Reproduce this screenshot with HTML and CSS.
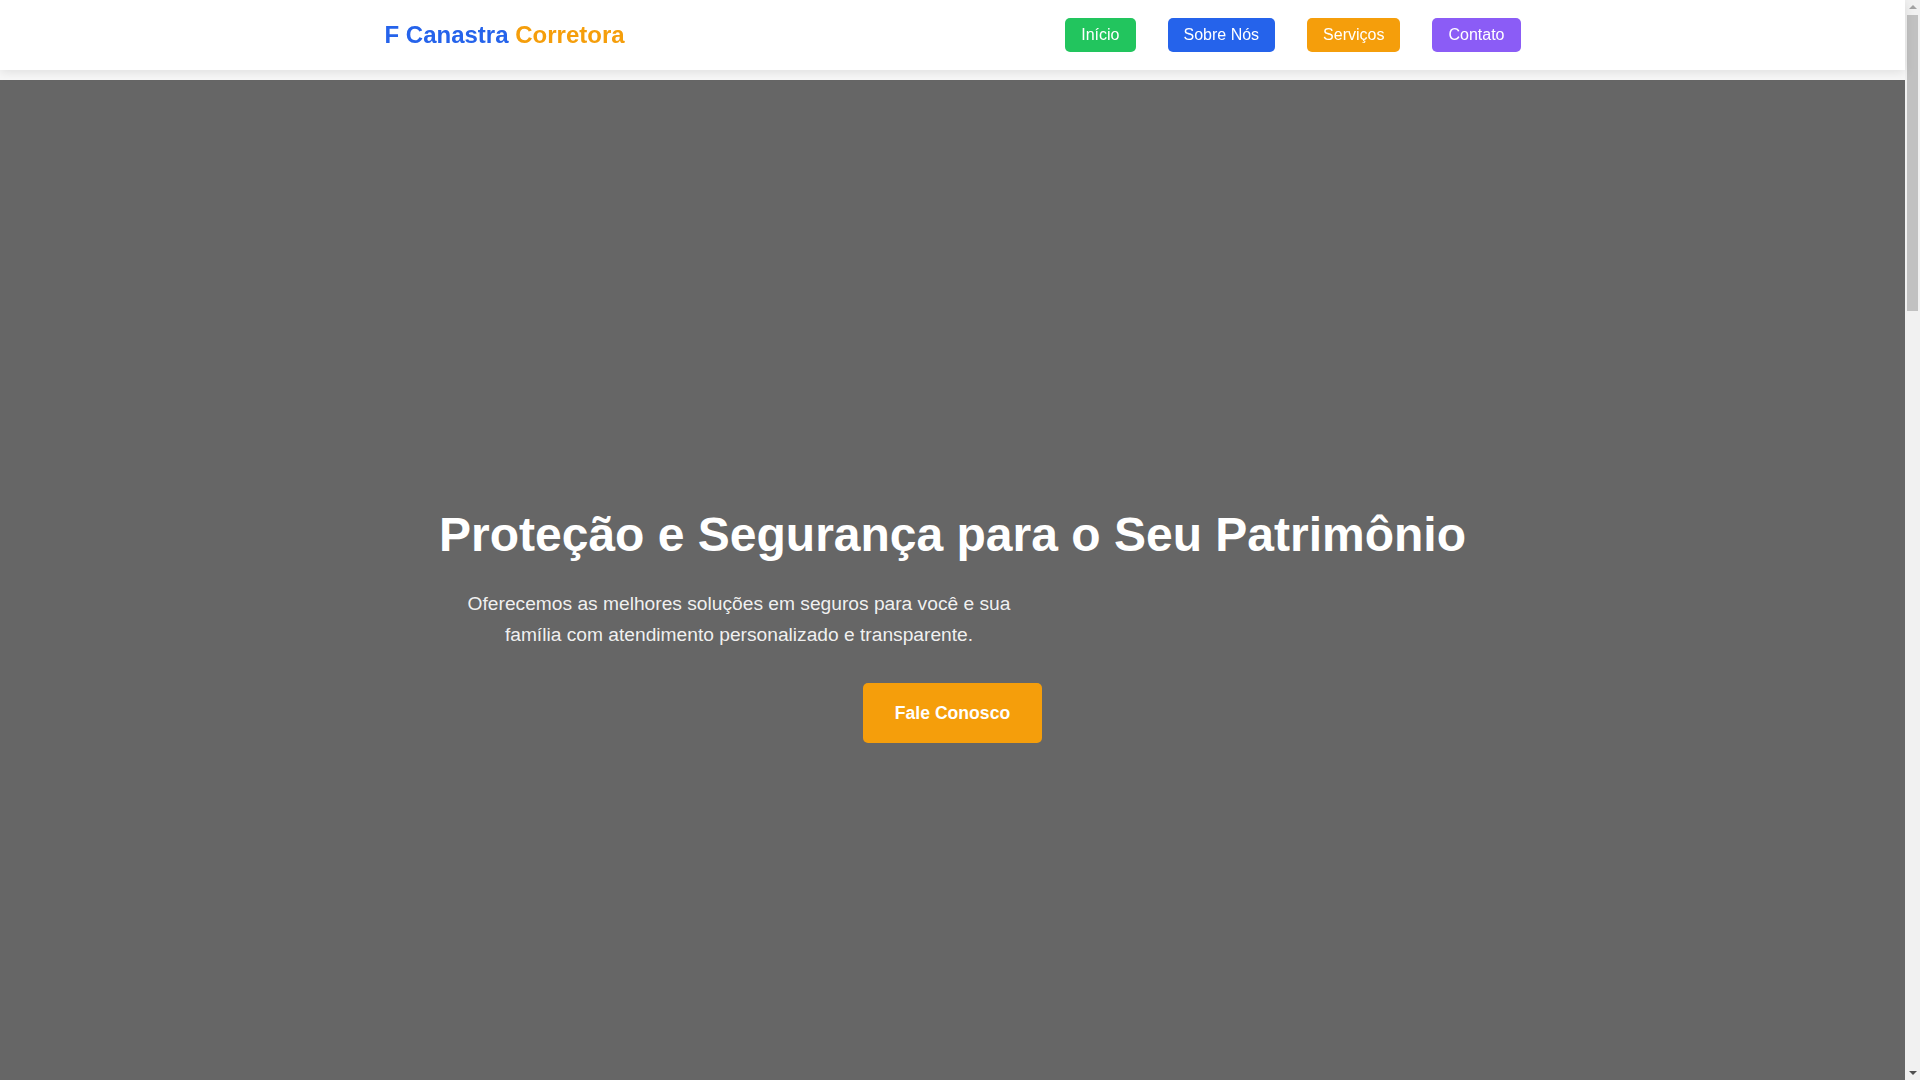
FILE: index.html
```html
<!DOCTYPE html>
<html lang="pt-BR">
<head>
<meta charset="UTF-8">
<title>F Canastra Corretora</title>
<link rel="stylesheet" href="styles.css">
</head>
<body>
<header class="site-header">
  <div class="container header-inner">
    <div class="logo"><span class="logo-blue">F Canastra</span> <span class="logo-orange">Corretora</span></div>
    <nav>
      <ul class="nav-list">
        <li><a href="#" class="nav-link nav-green">Início</a></li>
        <li><a href="#" class="nav-link nav-blue">Sobre Nós</a></li>
        <li><a href="#" class="nav-link nav-orange">Serviços</a></li>
        <li><a href="#" class="nav-link nav-purple">Contato</a></li>
      </ul>
    </nav>
  </div>
</header>
<section class="hero">
  <div class="hero-content">
    <h1 class="hero-title">Proteção e Segurança para o Seu Patrimônio</h1>
    <p class="hero-text">Oferecemos as melhores soluções em seguros para você e sua família com atendimento personalizado e transparente.</p>
    <a href="#" class="cta">Fale Conosco</a>
  </div>
</section>
<div class="scrollbar" aria-hidden="true">
  <span class="sb-arrow sb-up"></span>
  <span class="sb-thumb"></span>
  <span class="sb-arrow sb-down"></span>
</div>
</body>
</html>
```
FILE: styles.css
```css
* { box-sizing: border-box; }
html, body { margin: 0; padding: 0; }
body {
  font-family: "Liberation Sans", Arial, sans-serif;
  line-height: 1.6;
  background: #f7f7f7;
  color: #333;
  padding-right: 15px;
}
.site-header {
  position: relative;
  z-index: 2;
  background: #ffffff;
  box-shadow: 0 2px 10px rgba(0, 0, 0, 0.1);
  padding: 1rem 0;
}
.container {
  max-width: 1200px;
  margin: 0 auto;
  padding: 0 2rem;
}
.header-inner {
  display: flex;
  align-items: center;
  justify-content: space-between;
}
.logo {
  font-size: 24px;
  font-weight: bold;
}
.logo-blue { color: #2563eb; }
.logo-orange { color: #f59e0b; }
.nav-list {
  list-style: none;
  margin: 0;
  padding: 0;
  display: flex;
  gap: 2rem;
}
.nav-link {
  display: block;
  color: #ffffff;
  text-decoration: none;
  font-size: 16px;
  padding: 4px 16px;
  border-radius: 5px;
}
.nav-green { background: #22c55e; }
.nav-blue { background: #2563eb; }
.nav-orange { background: #f59e0b; }
.nav-purple { background: #8b5cf6; }
.hero {
  margin-top: 10px;
  min-height: 1088px;
  background: #666666;
  display: flex;
  align-items: center;
  justify-content: center;
  text-align: center;
  color: #ffffff;
}
.hero-title {
  font-size: 48px;
  line-height: 1.2;
  margin: 0 0 26px;
  font-weight: bold;
}
.hero-text {
  font-size: 1.2rem;
  max-width: 600px;
  margin: 0 0 2rem;
  color: rgba(255, 255, 255, 0.92);
}
.cta {
  display: inline-block;
  background: #f59e0b;
  color: #ffffff;
  text-decoration: none;
  font-weight: bold;
  font-size: 1.1rem;
  padding: 1rem 2rem;
  border-radius: 5px;
}
.scrollbar {
  position: fixed;
  top: 0;
  right: 0;
  width: 15px;
  height: 100vh;
  background: #f1f1f1;
  display: flex;
  flex-direction: column;
  align-items: center;
}
.sb-arrow {
  width: 0;
  height: 0;
  border-left: 4px solid transparent;
  border-right: 4px solid transparent;
  margin: 5px 0;
}
.sb-up { border-bottom: 4px solid #a3a3a3; }
.sb-down { border-top: 4px solid #505050; margin-top: auto; }
.sb-thumb {
  width: 11px;
  height: 296px;
  margin-top: 1px;
  background: #c1c1c1;
}
```
